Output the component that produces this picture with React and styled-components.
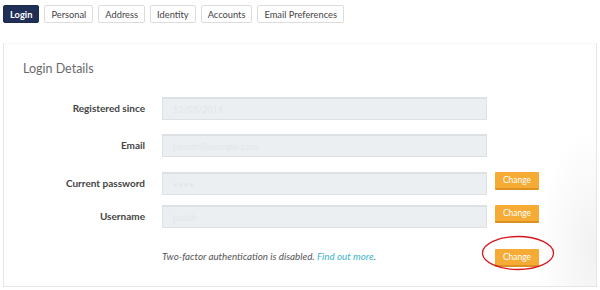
import styled, { createGlobalStyle } from 'styled-components'

const GlobalStyle = createGlobalStyle`
  body {
    margin: 0;
    background: #fff;
    font-family: Lato, "Open Sans", sans-serif;
  }
`

const tabs = ['Login', 'Personal', 'Address', 'Identity', 'Accounts', 'Email Preferences']

const fields = [
  { label: 'Registered since', value: '12/03/2014', top: 0 },
  { label: 'Email', value: 'j.smith@example.com', top: 14 },
  { label: 'Current password', value: '••••', change: true, top: 15 },
  { label: 'Username', value: 'jsmith', change: true, top: 10 },
]

export default function App() {
  return (
    <Page>
      <GlobalStyle />
      <TabBar>
        {tabs.map((t, i) => (
          <Tab key={t} $active={i === 0}>{t}</Tab>
        ))}
      </TabBar>
      <Panel>
        <Title>Login Details</Title>
        <Form>
          {fields.map((f) => (
            <Row key={f.label} $top={f.top}>
              <Label>{f.label}</Label>
              <Input readOnly value={f.value} />
              {f.change && <ChangeButton>Change</ChangeButton>}
            </Row>
          ))}
          <NoteRow>
            <Label />
            <Note>
              Two-factor authentication is disabled. <Link href="#">Find out more</Link>.
            </Note>
            <Marked>
              <ChangeButton>Change</ChangeButton>
              <Circle viewBox="0 0 74 36">
                <ellipse cx="37" cy="18" rx="35.5" ry="16.5" fill="none" stroke="#d8161e" strokeWidth="1.3" />
              </Circle>
            </Marked>
          </NoteRow>
        </Form>
      </Panel>
    </Page>
  )
}

const Page = styled.div`
  width: 600px;
  height: 290px;
  padding: 5px 3px 0;
  box-sizing: border-box;
`

const TabBar = styled.div`
  display: flex;
  gap: 5px;
`

const Tab = styled.div`
  height: 18px;
  padding: 0 6px;
  display: flex;
  align-items: center;
  box-sizing: border-box;
  font-size: 9.3px;
  border-radius: 2px;
  border: 1px solid ${(p) => (p.$active ? '#1b2a4e' : '#dcdcdc')};
  background: ${(p) => (p.$active ? '#1f2f55' : '#fff')};
  color: ${(p) => (p.$active ? '#fff' : '#444')};
  font-weight: ${(p) => (p.$active ? 700 : 400)};
`

const Panel = styled.div`
  margin-top: 20px;
  width: 594px;
  height: 244px;
  box-sizing: border-box;
  border: 1px solid #e6e6e6;
  border-top-color: #f7f7f7;
  padding: 17px 0 0 19px;
  background: radial-gradient(ellipse 60px 120px at 100% 85%, #f1f1f1, #fff);
`

const Title = styled.div`
  font-size: 12.5px;
  color: #6a6a6a;
`

const Form = styled.div`
  margin-top: 21px;
  display: flex;
  flex-direction: column;
`

const Row = styled.div`
  display: flex;
  align-items: flex-start;
  gap: 8px;
  margin-top: ${(p) => p.$top}px;
`

const Label = styled.div`
  width: 122px;
  flex: none;
  height: 23px;
  line-height: 23px;
  text-align: right;
  font-size: 10px;
  font-weight: 700;
  color: #444;
  margin-right: 9px;
`

const Input = styled.input`
  width: 325px;
  height: 23px;
  box-sizing: border-box;
  border: 1px solid #dde1e4;
  border-width: 2px 1px 1px;
  background: #eceff1;
  color: #e3e6e8;
  font-family: inherit;
  font-size: 9px;
  padding: 0 10px;
  outline: none;
`

const ChangeButton = styled.button`
  width: 44px;
  height: 18px;
  padding: 0;
  border: none;
  border-bottom: 2px solid #dc9222;
  border-radius: 1px;
  background: #f6ab35;
  color: #fff;
  font-family: inherit;
  font-size: 8.5px;
`

const NoteRow = styled.div`
  display: flex;
  align-items: center;
  gap: 8px;
  margin-top: 16px;
`

const Note = styled.div`
  width: 325px;
  font-size: 9.8px;
  font-style: italic;
  color: #555;
`

const Link = styled.a`
  color: #3eb4c8;
  text-decoration: none;
`

const Marked = styled.div`
  position: relative;
`

const Circle = styled.svg`
  position: absolute;
  left: -14px;
  top: -9px;
  width: 74px;
  height: 36px;
  pointer-events: none;
`
